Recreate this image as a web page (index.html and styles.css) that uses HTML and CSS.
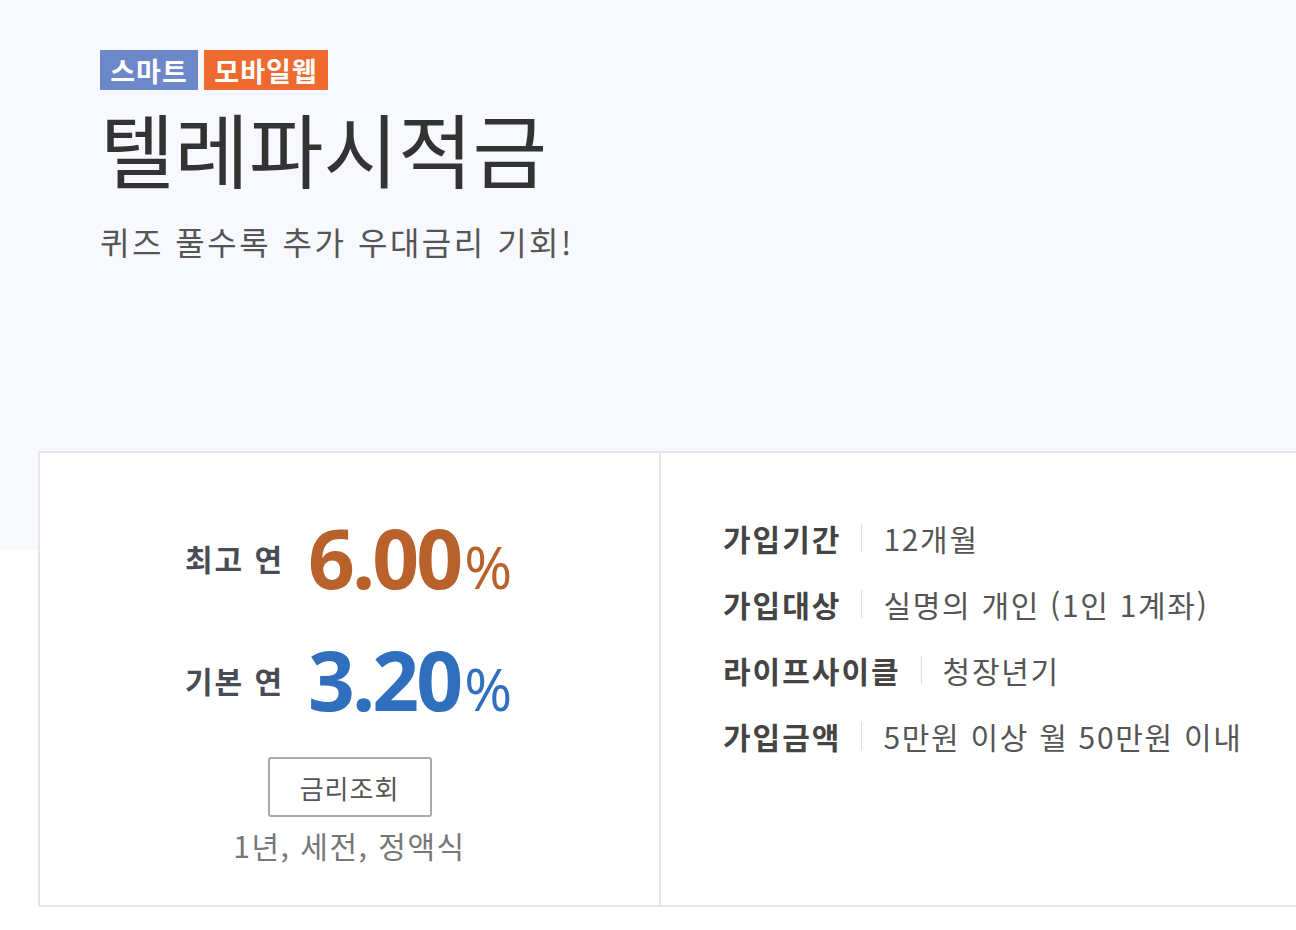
FILE: index.html
```html
<!DOCTYPE html>
<html lang="ko">
<head>
<meta charset="utf-8">
<title>텔레파시적금</title>
<link rel="stylesheet" href="styles.css">
</head>
<body>
<div class="page">
  <header class="hero">
    <div class="badges">
      <span class="badge badge-smart">스마트</span>
      <span class="badge badge-mobile">모바일웹</span>
    </div>
    <h1 class="title">텔레파시적금</h1>
    <p class="subtitle">퀴즈 풀수록 추가 우대금리 기회!</p>
  </header>
  <section class="card">
    <div class="rates">
      <div class="rate-row">
        <span class="rate-label">최고 연</span>
        <span class="rate-value rate-max">6.00<span class="pct">%</span></span>
      </div>
      <div class="rate-row">
        <span class="rate-label">기본 연</span>
        <span class="rate-value rate-base">3.20<span class="pct">%</span></span>
      </div>
      <button class="rate-btn" type="button">금리조회</button>
      <p class="rate-note">1년, 세전, 정액식</p>
    </div>
    <dl class="info">
      <div class="info-row"><dt>가입기간</dt><dd>12개월</dd></div>
      <div class="info-row"><dt>가입대상</dt><dd>실명의 개인 (1인 1계좌)</dd></div>
      <div class="info-row"><dt>라이프사이클</dt><dd>청장년기</dd></div>
      <div class="info-row"><dt>가입금액</dt><dd>5만원 이상 월 50만원 이내</dd></div>
    </dl>
  </section>
</div>
</body>
</html>
```

FILE: styles.css
```css
html, body {
  margin: 0;
  padding: 0;
  overflow: hidden;
}
body {
  font-family: "Noto Sans CJK KR", "Noto Sans", sans-serif;
  background: linear-gradient(#f8f9fe 0, #f8f9fe 550px, #ffffff 550px);
  color: #333;
  width: 1296px;
  height: 930px;
}
.page {
  display: flex;
  flex-direction: column;
}
.hero {
  padding: 50px 0 0 100px;
  height: 451px;
  box-sizing: border-box;
}
.badges {
  display: flex;
  gap: 6px;
}
.badge {
  display: inline-flex;
  align-items: center;
  justify-content: center;
  height: 40px;
  color: #fff;
  font-weight: 700;
  font-size: 27px;
  line-height: 1;
  letter-spacing: 1px;
}
.badge-smart { background: #6d88c9; width: 98px; }
.badge-mobile { background: #ee6a2e; width: 124px; }
.title {
  margin: 12px 0 0 0;
  font-size: 81px;
  line-height: 1.1;
  font-weight: 400;
  color: #333;
  letter-spacing: 0;
}
.subtitle {
  margin: 31px 0 0 0;
  font-size: 32px;
  line-height: 1.2;
  color: #555;
  font-weight: 400;
  letter-spacing: 2.5px;
}
.card {
  width: 1300px;
  margin-left: 38px;
  height: 456px;
  box-sizing: border-box;
  background: #fff;
  border: 2px solid #e6e6e6;
  display: flex;
}
.rates {
  width: 621px;
  flex: none;
  border-right: 2px solid #e6e6e6;
  display: flex;
  flex-direction: column;
  align-items: center;
  padding-top: 63px;
  box-sizing: border-box;
}
.rate-row {
  display: flex;
  align-items: flex-start;
  gap: 24px;
  height: 122px;
  margin-left: -2px;
}
.rate-label {
  font-size: 30px;
  font-weight: 700;
  color: #474c56;
  letter-spacing: 2px;
  line-height: 1;
  margin-top: 27px;
}
.rate-value {
  font-family: "Open Sans", "Noto Sans", sans-serif;
  font-weight: 700;
  font-size: 82px;
  letter-spacing: -3px;
  line-height: 1;
}
.pct {
  font-weight: 400;
  font-size: 58px;
  letter-spacing: 0;
  margin-left: 4px;
}
.rate-max { color: #b9612b; }
.rate-base { color: #2f6fbd; }
.rate-btn {
  margin-top: -3px;
  width: 164px;
  height: 60px;
  border: 2px solid #aaa;
  border-radius: 3px;
  background: #fff;
  font-family: "Noto Sans CJK KR", sans-serif;
  font-size: 26px;
  letter-spacing: 1px;
  color: #555;
  padding: 0;
  cursor: pointer;
}
.rate-note {
  margin: 10px 0 0 0;
  font-size: 30px;
  letter-spacing: 1.5px;
  color: #777;
  line-height: 1.2;
}
.info {
  margin: 0;
  padding: 52px 0 0 62px;
  display: flex;
  flex-direction: column;
}
.info-row {
  display: flex;
  align-items: center;
  height: 66px;
}
.info dt {
  font-size: 30px;
  font-weight: 700;
  color: #444;
  letter-spacing: 2px;
  padding-right: 20px;
  border-right: 1px solid #ddd;
  line-height: 28px;
}
.info dd {
  margin: 0;
  padding-left: 21px;
  font-size: 30px;
  letter-spacing: 1.7px;
  color: #555;
  line-height: 28px;
}
```
